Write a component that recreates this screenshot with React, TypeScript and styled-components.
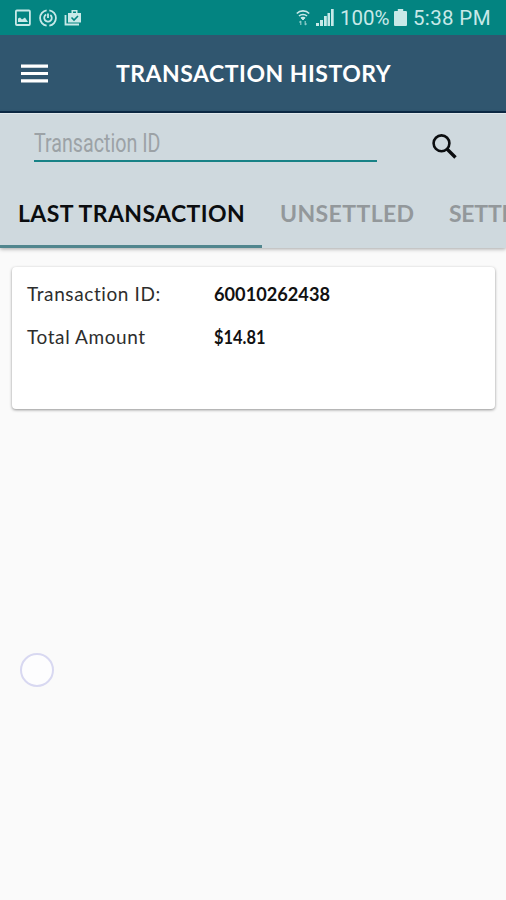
import React from "react";
import styled, { createGlobalStyle } from "styled-components";

const GlobalStyle = createGlobalStyle`
  *, *::before, *::after { box-sizing: border-box; }
  body { margin: 0; background: #fafafa; overflow: hidden; }
`;

const Screen = styled.main`
  position: relative;
  display: flex;
  flex-direction: column;
  width: 506px;
  height: 900px;
  overflow: hidden;
  background: #fafafa;
  font-family: Lato, "Noto Sans", sans-serif;
`;

const StatusBar = styled.div`
  display: flex;
  align-items: center;
  justify-content: space-between;
  flex: none;
  height: 35px;
  padding: 0 15px 0 14px;
  background: #038481;
  color: #c8e9e8;
`;

const StatusGroup = styled.div<{ $gap: number }>`
  display: flex;
  align-items: center;
  gap: ${(p) => p.$gap}px;
  height: 35px;
  svg { display: block; flex: none; }
`;

const StatusText = styled.span<{ $width: number; $spacing: number }>`
  width: ${(p) => p.$width}px;
  font: 400 20.5px/36px Roboto, sans-serif;
  letter-spacing: ${(p) => p.$spacing}px;
  white-space: nowrap;
`;

const Header = styled.header`
  display: flex;
  align-items: center;
  flex: none;
  height: 78px;
  padding: 0 0 0 21px;
  background: #30566f;
  border-bottom: 2px solid #0c2b47;
`;

const IconButton = styled.button`
  display: flex;
  padding: 0;
  border: 0;
  background: none;
  color: inherit;
`;

const Title = styled.h1`
  margin: 0 0 0 68px;
  color: #fff;
  font: 700 23px/30px Lato, sans-serif;
  letter-spacing: 0.5px;
  white-space: nowrap;
`;

const FilterPanel = styled.section`
  flex: none;
  height: 135px;
  background: #cfd9de;
  border-top: 1px solid #e0e8ec;
  box-shadow: 0 1px 4px rgba(0, 0, 0, 0.35);
`;

const SearchRow = styled.div`
  display: flex;
  height: 66px;
  padding: 0 48px 0 34px;
  justify-content: space-between;
  align-items: flex-start;
`;

const SearchField = styled.div`
  display: flex;
  width: 343px;
  height: 48px;
  border-bottom: 2px solid #188286;
`;

const Placeholder = styled.span`
  color: #9ca2a6;
  font: 400 25px/59px Roboto, sans-serif;
  transform: scaleX(0.787);
  transform-origin: left;
  white-space: nowrap;
`;

const SearchButton = styled(IconButton)`
  margin-top: 19px;
  color: #0b0d0f;
`;

const Tabs = styled.nav`
  display: flex;
  height: 68px;
`;

const Tab = styled.div<{ $width: number; $active?: boolean; $spacing?: number }>`
  flex: none;
  width: ${(p) => p.$width}px;
  height: 68px;
  padding-left: 18px;
  border-bottom: 3px solid ${(p) => (p.$active ? "#51868e" : "transparent")};
  color: ${(p) => (p.$active ? "#0b0d0f" : "#93989b")};
  font: 700 23px/67px Lato, sans-serif;
  letter-spacing: ${(p) => p.$spacing ?? 0.4}px;
  white-space: nowrap;
`;

const Card = styled.article`
  display: grid;
  grid-template-columns: 187px 1fr;
  grid-auto-rows: 43px;
  height: 142px;
  margin: 19px 11px 0 12px;
  padding: 5px 15px;
  background: #fff;
  border-radius: 4px;
  box-shadow: 0 1px 3px rgba(0, 0, 0, 0.42);
`;

const Term = styled.span<{ $spacing: number }>`
  color: #2d2d2d;
  font: 400 19px/43px Lato, sans-serif;
  letter-spacing: ${(p) => p.$spacing}px;
`;

const Value = styled.span<{ $scale: number }>`
  color: #111;
  font: 700 19px/43px Lato, sans-serif;
  transform: scaleX(${(p) => p.$scale});
  transform-origin: left;
`;

const TouchRing = styled.div`
  position: absolute;
  left: 20px;
  top: 653px;
  width: 34px;
  height: 34px;
  border: 2px solid #d8d8f1;
  border-radius: 50%;
  background: #fdfdfe;
`;

const PictureIcon = () => (
  <svg width="18" height="18" viewBox="0 0 18 18" fill="none" stroke="currentColor" strokeWidth="1.8">
    <rect x="1.900" y="1.500" width="14" height="14.500" rx="1" />
    <path d="M4 13V9.500l2-1 2 2 3-2 3 4.500Z" fill="currentColor" stroke="none" />
  </svg>
);

const SyncIcon = () => (
  <svg width="18" height="18" viewBox="0 0 20 20" fill="none" stroke="currentColor">
    <path d="M8.500 1.500A8.600 8.600 0 0 0 8.500 18.500M11.500 18.500A8.600 8.600 0 0 0 11.500 1.500" strokeWidth="2" />
    <path d="M8 6.200A4.200 4.200 0 1 0 12.600 6.600M10 5v5" strokeWidth="2" />
  </svg>
);

const BriefcaseIcon = () => (
  <svg width="18" height="18" viewBox="0 0 18 18" fill="none">
    <path d="M1.500 6v9.500H15" stroke="currentColor" strokeWidth="1.800" />
    <path d="M4 4h3.500V1h6v3H17v9.500H4ZM9 2.500V4h3V2.500Z" fill="currentColor" fillRule="evenodd" />
    <path d="m7.500 8.500 2.500 2.500 4-4" stroke="#038481" strokeWidth="1.600" />
  </svg>
);

const WifiIcon = () => (
  <svg width="14" height="18" viewBox="0 0 14 18" fill="none" stroke="currentColor">
    <path d="M.8 4.500C4 1 10 1 13.200 4.500M3 7c2-2 6-2 8 0M5 9.200c1-1 3-1 4 0" strokeWidth="1.600" />
    <path d="m5.500 9 1.500 2 1.500-2Z" fill="currentColor" />
    <path d="M4.800 12v4M3.500 13.500l1.300-1.500M9.200 12v4M10.500 14.500 9.200 16" strokeWidth="1.200" opacity=".7" />
  </svg>
);

const SignalIcon = () => (
  <svg width="18" height="17" viewBox="0 0 18 17" fill="currentColor">
    <path d="M0 17v-3h3v3ZM4 17v-6h3v6ZM8 17V7h2.800v10ZM11.500 17V4H14v13ZM15 17V0h2.700v17Z" />
  </svg>
);

const BatteryIcon = () => (
  <svg width="13" height="17" viewBox="0 0 12 17" preserveAspectRatio="none" fill="currentColor">
    <path d="M3.500 0h5v2H11a1 1 0 0 1 1 1v13a1 1 0 0 1-1 1H1a1 1 0 0 1-1-1V3a1 1 0 0 1 1-1h2.500Z" />
  </svg>
);

const MenuIcon = () => (
  <svg width="27" height="20" viewBox="0 0 27 20" fill="#fff">
    <path d="M0 1.500h27v3.200H0ZM0 8.900h27v3.200H0ZM0 16.300h27v3.200H0Z" />
  </svg>
);

const SearchIcon = () => (
  <svg width="26" height="27" viewBox="0 0 26 27" fill="none" stroke="currentColor">
    <circle cx="9.500" cy="10.300" r="7.900" strokeWidth="2.600" />
    <path d="m15 16 8.500 8.500" strokeWidth="3.300" />
  </svg>
);

export default function App() {
  return (
    <Screen>
      <GlobalStyle />
      <StatusBar>
        <StatusGroup $gap={7}>
          <PictureIcon />
          <SyncIcon />
          <BriefcaseIcon />
        </StatusGroup>
        <StatusGroup $gap={6}>
          <WifiIcon />
          <SignalIcon />
          <StatusText $width={48} $spacing={0}>100%</StatusText>
          <BatteryIcon />
          <StatusText $width={78} $spacing={0.35}>5:38 PM</StatusText>
        </StatusGroup>
      </StatusBar>
      <Header>
        <IconButton aria-label="Menu"><MenuIcon /></IconButton>
        <Title>TRANSACTION HISTORY</Title>
      </Header>
      <FilterPanel>
        <SearchRow>
          <SearchField><Placeholder>Transaction ID</Placeholder></SearchField>
          <SearchButton aria-label="Search"><SearchIcon /></SearchButton>
        </SearchRow>
        <Tabs>
          <Tab $width={262} $active>LAST TRANSACTION</Tab>
          <Tab $width={169}>UNSETTLED</Tab>
          <Tab $width={130} $spacing={-0.25}>SETTLED</Tab>
        </Tabs>
      </FilterPanel>
      <Card>
        <Term $spacing={0.6}>Transaction ID:</Term>
        <Value $scale={0.957}>60010262438</Value>
        <Term $spacing={0.6}>Total Amount</Term>
        <Value $scale={0.865}>$14.81</Value>
      </Card>
      <TouchRing />
    </Screen>
  );
}
